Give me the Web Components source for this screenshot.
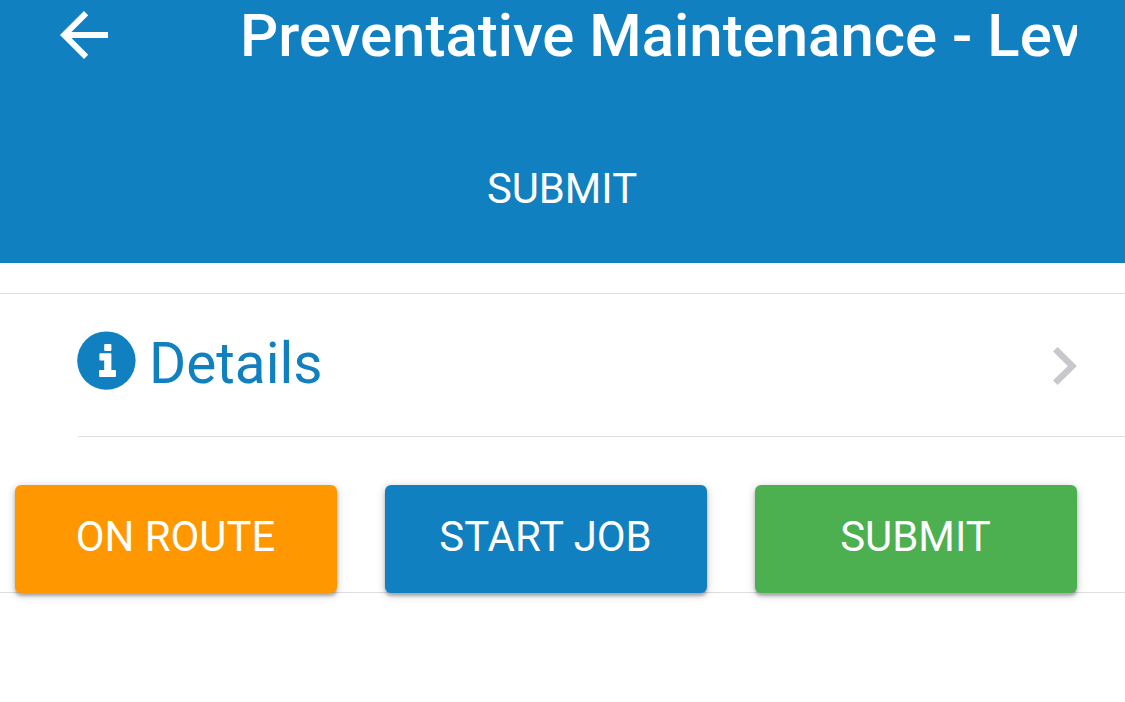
<!DOCTYPE html>
<html lang="en">
<head>
<meta charset="utf-8">
<title>Preventative Maintenance</title>
<style>
  body {
    margin: 0;
    min-height: 100vh;
    background: #fff;
    font-family: Roboto, sans-serif;
    --primary: #1180c1;
    --line: #dedede;
  }
</style>
</head>
<body>
<app-header>
  <span slot="title">Preventative Maintenance - Lev</span>
  <span slot="action">SUBMIT</span>
</app-header>
<job-list>
  <detail-item>Details</detail-item>
  <button-row>
    <job-button style="--color: #ff9800">ON ROUTE</job-button>
    <job-button style="--color: #1180c1">START JOB</job-button>
    <job-button style="--color: #4caf50">SUBMIT</job-button>
  </button-row>
</job-list>

<script>
// Base class: puts the element's template in an open shadow root
class BaseElement extends HTMLElement {
  constructor() {
    super();
    this.attachShadow({ mode: "open" });
  }

  connectedCallback() {
    const template = document.createElement("template");
    template.innerHTML = this.getStyles() + this.getTemplate();
    this.shadowRoot.replaceChildren(template.content.cloneNode(true));
  }
}

// Blue bar with the back arrow, the title and one action under it
class AppHeader extends BaseElement {
  getTemplate() {
    return `
      <div class="bar">
        <svg viewBox="0 0 24 24" fill="#fff">
          <path d="M20 11H7.83l5.59-5.59L12 4l-8 8 8 8 1.41-1.41L7.83 13H20v-2z"/>
        </svg>
        <div class="title"><slot name="title"></slot></div>
      </div>
      <div class="action"><slot name="action"></slot></div>
    `;
  }

  getStyles() {
    return `
      <style>
        :host {
          display: block;
          height: 263px;
          background: var(--primary);
          color: #fff;
        }
        .bar {
          display: flex;
          align-items: center;
          height: 70px;
          padding: 0 48px;
        }
        svg {
          flex: none;
          width: 72px;
          height: 72px;
          margin-right: 120px;
        }
        .title {
          flex: 1;
          overflow: hidden;
          white-space: nowrap;
          padding-top: 2px;
          font-size: 59.95px;
          font-weight: 500;
          line-height: 70px;
        }
        .action {
          padding: 94px 1px 0 0;
          text-align: center;
          font-size: 41.8px;
          line-height: 50px;
        }
      </style>
    `;
  }
}

// List with a line above and below
class JobList extends BaseElement {
  getTemplate() {
    return `<slot></slot>`;
  }

  getStyles() {
    return `
      <style>
        :host {
          display: block;
          margin-top: 30px;
          border-top: 1px solid var(--line);
          border-bottom: 1px solid var(--line);
        }
      </style>
    `;
  }
}

// Row with an info icon, a label and a chevron
class DetailItem extends BaseElement {
  getTemplate() {
    return `
      <svg class="info" viewBox="0 0 60 60">
        <circle cx="29.4" cy="29.6" r="29.2" fill="#1180c1"/>
        <g fill="#fff">
          <rect x="27.2" y="13" width="7.2" height="7" rx="1"/>
          <path d="M23.4 22.3H33.4a1 1 0 0 1 1 1V39H38a1 1 0 0 1 1 1V45a1 1 0 0 1-1 1H23a1 1 0 0 1-1-1V40a1 1 0 0 1 1-1H27.2V29.5H23.4a1 1 0 0 1-1-1V23.3a1 1 0 0 1 1-1z"/>
        </g>
      </svg>
      <span class="label"><slot></slot></span>
      <svg class="arrow" viewBox="0 0 24 38">
        <path d="M2.3 2.3L19.3 19 2.3 35.7" fill="none" stroke="#c8c7cc" stroke-width="6.5"/>
      </svg>
    `;
  }

  getStyles() {
    return `
      <style>
        :host {
          display: flex;
          align-items: flex-start;
          height: 142px;
          margin-left: 78px;
          padding-right: 48px;
          border-bottom: 1px solid var(--line);
          color: var(--primary);
        }
        .info {
          width: 60px;
          height: 60px;
          margin: 37px 12px 0 -1px;
        }
        .label {
          flex: 1;
          padding-top: 36px;
          font-size: 56.7px;
          line-height: 68px;
        }
        .arrow {
          width: 24px;
          height: 38px;
          margin-top: 53px;
        }
      </style>
    `;
  }
}

// Buttons side by side, they hang over the list's bottom line
class ButtonRow extends BaseElement {
  getTemplate() {
    return `<slot></slot>`;
  }

  getStyles() {
    return `
      <style>
        :host {
          display: flex;
          gap: 48px;
          height: 107px;
          padding: 48px 48px 0 15px;
        }
      </style>
    `;
  }
}

// Raised button, its colour comes from --color
class JobButton extends BaseElement {
  getTemplate() {
    return `<button><slot></slot></button>`;
  }

  getStyles() {
    return `
      <style>
        :host {
          display: block;
          flex: 1;
          height: 108px;
        }
        button {
          display: block;
          width: 100%;
          height: 108px;
          padding: 0 1px 6px 0;
          border: 0;
          border-radius: 6px;
          background: var(--color);
          color: #fff;
          font: 41.9px Roboto, sans-serif;
          box-shadow: 0 3px 3px rgba(0, 0, 0, .22), 0 2px 8px rgba(0, 0, 0, .24);
        }
      </style>
    `;
  }
}

customElements.define("app-header", AppHeader);
customElements.define("job-list", JobList);
customElements.define("detail-item", DetailItem);
customElements.define("button-row", ButtonRow);
customElements.define("job-button", JobButton);
</script>
</body>
</html>
